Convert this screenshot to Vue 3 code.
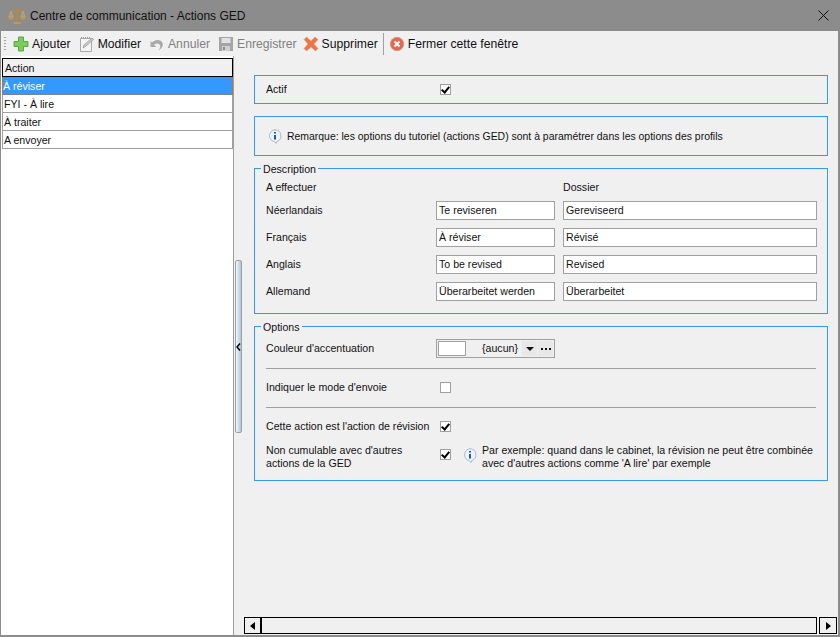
<script setup>
const actions = ['À réviser', 'FYI - À lire', 'À traiter', 'A envoyer']
const langs = [
  { label: 'Néerlandais', a: 'Te reviseren', b: 'Gereviseerd' },
  { label: 'Français', a: 'À réviser', b: 'Révisé' },
  { label: 'Anglais', a: 'To be revised', b: 'Revised' },
  { label: 'Allemand', a: 'Überarbeitet werden', b: 'Überarbeitet' },
]
</script>

<template>
  <div class="window">
    <header class="titlebar">
      <svg class="logo" width="18" height="18" viewBox="0 0 18 18" fill="none">
        <path d="M9 1v14M3 4h12" stroke="#b98a3e" stroke-width="1.600"/>
        <path d="M5.500 16h7" stroke="#c9974a" stroke-width="2"/>
        <path d="M3 4L.8 10h4.400zM15 4l-2.200 6h4.400z" fill="#a89a80" stroke="#c9a66a" stroke-width=".8"/>
        <path d="M.5 10a2.500 2.500 0 0 0 5 0zM12.500 10a2.500 2.500 0 0 0 5 0z" fill="#c9974a"/>
      </svg>
      <span class="title">Centre de communication - Actions GED</span>
      <svg class="close" width="11" height="11" viewBox="0 0 11 11"><path d="M.5.5l10 10M10.500.5l-10 10" stroke="#111" stroke-width="1"/></svg>
    </header>

    <nav class="toolbar">
      <span class="grip"></span>
      <span class="tool">
        <svg width="16" height="16" viewBox="0 0 16 16"><path d="M5.500 1h5v4.500H15v5h-4.500V15h-5v-4.500H1v-5h4.500z" fill="#7ccb5e" stroke="#5aa845"/></svg>
        Ajouter
      </span>
      <span class="tool">
        <svg width="16" height="16" viewBox="0 0 16 16"><path d="M1.500 2.500h11v13h-11z" fill="#f4f4f4" stroke="#aaa"/><path d="M2 1.500h10" stroke="#999" stroke-dasharray="1 1"/><path d="M4 12l1-3 8-7 1.500 1.500-8 7z" fill="#c9c9c9" stroke="#888" stroke-width=".6"/></svg>
        Modifier
      </span>
      <span class="tool off">
        <svg width="16" height="16" viewBox="0 0 16 16"><path d="M3 6.500C6 3 12 3 13.500 7c1 3-1 6-4 7.500 1.500-2 2.500-4.500 1-6-1.500-1.500-4-1-5.500.5L7.500 11H1.500V5z" fill="#a8a8a8"/></svg>
        Annuler
      </span>
      <span class="tool off save">
        <svg width="16" height="16" viewBox="0 0 16 16"><path d="M1 1h14v14H1z" fill="#a5a5a5"/><path d="M3.500 2h9v5h-9z" fill="#e2e2e2"/><path d="M4 10h8v5H4z" fill="#d0d0d0"/><path d="M5 11h2v3H5z" fill="#8e8e8e"/></svg>
        Enregistrer
      </span>
      <span class="tool">
        <svg width="16" height="16" viewBox="0 0 16 16"><path d="M1 3.500L3.500 1 8 5l4-4 3 2.500L11 8l4 4.500L12.500 15 8 11l-4.500 4L1 12.500 5 8z" fill="#ee7448" stroke="#e6a080" stroke-width=".6"/></svg>
        Supprimer
      </span>
      <span class="sep"></span>
      <span class="tool">
        <svg width="16" height="16" viewBox="0 0 16 16"><circle cx="8" cy="8" r="6.700" fill="#e8664d" stroke="#c9a090"/><path d="M5.500 5.500l5 5M10.500 5.500l-5 5" stroke="#fff" stroke-width="2"/></svg>
        Fermer cette fenêtre
      </span>
    </nav>

    <div class="body">
      <aside class="list">
        <div class="list-head">Action</div>
        <div v-for="(a, i) in actions" :key="a" class="list-row" :class="{ selected: i === 0 }">{{ a }}</div>
      </aside>

      <div class="splitter">
        <div class="handle">
          <svg width="5" height="8" viewBox="0 0 5 8"><path d="M4 .5L1 4l3 3.500" fill="none" stroke="#000" stroke-width="1.500"/></svg>
        </div>
      </div>

      <main class="content">
        <div class="scroll-area">
          <section class="panel actif">
            <span class="lbl">Actif</span>
            <span class="check on"></span>
          </section>

          <section class="panel note">
            <svg class="info" width="14" height="15" viewBox="0 0 14 15"><path d="M7 .8a6 6 0 0 1 1.800 11.700L8 14.500 6.500 12.700A6 6 0 0 1 7 .8z" fill="#eef3fb" stroke="#a9b8d2"/><path d="M7 3v1.500M7 6v4.500" stroke="#1f55b5" stroke-width="2"/></svg>
            <span>Remarque: les options du tutoriel (actions GED) sont à paramétrer dans les options des profils</span>
          </section>

          <fieldset class="group desc">
            <legend>Description</legend>
            <div class="desc-head">
              <span>A effectuer</span>
              <span>Dossier</span>
            </div>
            <div v-for="l in langs" :key="l.label" class="desc-row">
              <span class="lbl">{{ l.label }}</span>
              <input class="field" type="text" :value="l.a" />
              <input class="field" type="text" :value="l.b" />
            </div>
          </fieldset>

          <fieldset class="group opts">
            <legend>Options</legend>
            <div class="opt-row first">
              <span class="lbl">Couleur d'accentuation</span>
              <div class="color">
                <span class="swatch"></span>
                <span class="none">{aucun}</span>
                <span class="cbtn"><i class="tri"></i></span>
                <span class="cbtn dots">
                  <svg width="10" height="2" viewBox="0 0 10 2"><path d="M0 0h2v2H0zM4 0h2v2H4zM8 0h2v2H8z" fill="#111"/></svg>
                </span>
              </div>
            </div>
            <hr />
            <div class="opt-row">
              <span class="lbl">Indiquer le mode d'envoie</span>
              <span class="check"></span>
            </div>
            <hr />
            <div class="opt-row">
              <span class="lbl">Cette action est l'action de révision</span>
              <span class="check on"></span>
            </div>
            <div class="opt-row last">
              <span class="lbl two">Non cumulable avec d'autres<br />actions de la GED</span>
              <span class="check on"></span>
              <svg class="info small" width="14" height="15" viewBox="0 0 14 15"><path d="M7 .8a6 6 0 0 1 1.800 11.700L8 14.500 6.500 12.700A6 6 0 0 1 7 .8z" fill="#eef3fb" stroke="#a9b8d2"/><path d="M7 3v1.500M7 6v4.500" stroke="#1f55b5" stroke-width="2"/></svg>
              <span class="hint">Par exemple: quand dans le cabinet, la révision ne peut être combinée<br />avec d'autres actions comme 'A lire' par exemple</span>
            </div>
          </fieldset>
        </div>

        <div class="hscroll">
          <span class="sbtn"><i class="arrow left"></i></span>
          <span class="track"></span>
          <span class="sbtn"><i class="arrow right"></i></span>
        </div>
      </main>
    </div>
  </div>
</template>

<style>
html, body { margin: 0; padding: 0; }
</style>

<style scoped>
.window {
  width: 840px;
  height: 637px;
  box-sizing: border-box;
  display: flex;
  flex-direction: column;
  background: #f0f0f0;
  border: solid #8c8c8c;
  border-width: 0 2px 2px 1px;
  font-family: "Liberation Sans", Arial, sans-serif;
  font-size: 10.6px;
  color: #111;
  overflow: hidden;
}
.titlebar {
  height: 31px;
  margin: 0 -2px 0 -1px;
  flex: none;
  background: #8c8c8c;
  display: flex;
  align-items: center;
  padding: 0 11px 0 8px;
}
.title { margin-left: 4px; font-size: 12px; color: #111; }
.logo { flex: none; }
.close { margin-left: auto; }
.toolbar {
  height: 25px;
  flex: none;
  display: flex;
  align-items: center;
  padding-left: 3px;
  font-size: 12.2px;
}
.grip {
  width: 2px;
  height: 14px;
  margin-right: 7px;
  background: repeating-linear-gradient(#a0a0a0 0 1px, transparent 1px 3px);
}
.tool { display: flex; align-items: center; gap: 3px; margin-right: 8px; white-space: nowrap; }
.tool.off { color: #808080; }
.tool.save { margin-right: 6px; }
.sep { width: 1px; height: 22px; background: #a0a0a0; margin: 0 5px 0 -3px; }
.body { flex: 1; min-height: 0; display: flex; }
.list {
  width: 233px;
  flex: none;
  box-sizing: border-box;
  background: #fff;
  border-right: 1px solid #a0a0a0;
  padding: 2px 0 0 1px;
}
.list-head {
  height: 19px;
  box-sizing: border-box;
  border: 1px solid #000;
  background: #f0f0f0;
  padding-left: 2px;
  line-height: 18px;
}
.list-row {
  height: 18px;
  box-sizing: border-box;
  border: solid #a0a0a0;
  border-width: 0 1px 1px 1px;
  padding-left: 1px;
  line-height: 18px;
  background: #fff;
}
.list-row.selected { background: #3399ff; color: #fff; border: 1px dotted #b8702a; line-height: 16px; padding-left: 0; }
.splitter {
  width: 8px;
  flex: none;
  padding: 204px 0 0 1px;
  box-sizing: border-box;
}
.handle {
  width: 7px;
  height: 173px;
  box-sizing: border-box;
  border: 1px solid #a0a0a0;
  border-radius: 2px;
  background: linear-gradient(90deg, #f4f8fb, #a9c6dc);
  display: flex;
  align-items: center;
}
.content { flex: 1; min-width: 0; display: flex; flex-direction: column; }
.scroll-area { flex: 1; padding: 19px 10px 0 12px; box-sizing: border-box; }
.panel {
  box-sizing: border-box;
  border: 1px solid #3399ff;
  display: flex;
  align-items: center;
}
.actif { height: 29px; padding-left: 11px; margin-bottom: 12px; }
.actif .lbl { width: 174px; padding-bottom: 2px; }
.note { height: 40px; padding-left: 13px; gap: 5px; margin-bottom: 5px; font-size: 10.45px; }
.group {
  margin: 0;
  padding: 0 11px;
  min-width: 0;
  border: 1px solid #3399ff;
}
.group legend { padding: 2px 2px 0; margin-left: -5px; line-height: 12px; }
.desc { height: 153px; box-sizing: border-box; margin-bottom: 5px; }
.desc-head {
  display: grid;
  grid-template-columns: 297px 1fr;
  height: 15px;
  margin: 5px 0 6px;
  align-items: center;
}
.desc-head span { padding-bottom: 2px; }
.desc-row {
  display: grid;
  grid-template-columns: 162px 119px 254px;
  column-gap: 8px;
  align-items: center;
  height: 19px;
  margin-bottom: 8px;
}
.desc-row .lbl { padding-bottom: 2px; }
.field {
  width: 100%;
  height: 19px;
  box-sizing: border-box;
  margin: 0;
  border: 1px solid #a0a0a0;
  background: #fff;
  font: inherit;
  color: inherit;
  padding: 0 2px 2px;
  outline: none;
}
.opts { height: 162px; box-sizing: border-box; }
.opt-row { display: flex; align-items: center; height: 13px; }
.opt-row .lbl { width: 174px; flex: none; white-space: nowrap; padding-bottom: 2px; }
.opt-row.first { height: 19px; margin-top: 6px; }
.group hr { margin: 0; border: 0; border-top: 1px solid #a0a0a0; }
.first + hr { margin: 10px 0 12px; }
.first + hr + .opt-row + hr { margin: 13px 0 12px; }
.first + hr + .opt-row + hr + .opt-row { margin-bottom: 11px; }
.last { height: 26px; align-items: flex-start; }
.opt-row .two { line-height: 13px; padding-bottom: 0; }
.last .check { margin-top: 5px; }
.info.small { margin: 4px 0 0 12px; flex: none; }
.hint { margin-left: 5px; line-height: 13px; white-space: nowrap; }
.check {
  width: 11px;
  height: 11px;
  box-sizing: border-box;
  border: 1px solid #a0a0a0;
  background: #fff;
  position: relative;
  flex: none;
}
.check.on::after {
  content: "";
  position: absolute;
  left: 2px;
  top: 0;
  width: 3px;
  height: 6px;
  border: solid #000;
  border-width: 0 2px 2px 0;
  transform: rotate(40deg);
}
.color {
  margin-left: -4px;
  width: 119px;
  height: 19px;
  box-sizing: border-box;
  border: 1px solid #a0a0a0;
  background: #f0f0f0;
  display: flex;
  align-items: center;
  padding-left: 1px;
}
.swatch { width: 28px; height: 15px; box-sizing: border-box; border: 1px solid #a0a0a0; background: #fff; flex: none; }
.none { flex: 1; text-align: right; padding: 0 4px 2px 0; }
.cbtn { width: 15px; height: 15px; background: #e8e8e8; display: flex; align-items: center; justify-content: center; flex: none; margin-right: 1px; }
.tri { width: 0; height: 0; border: solid transparent; border-width: 4px 4px 0; border-top-color: #111; }
.hscroll {
  height: 17px;
  margin: 0 1px 1px 2px;
  display: flex;
  flex: none;
  gap: 2px;
  box-sizing: border-box;
}
.sbtn {
  width: 18px;
  height: 17px;
  box-sizing: border-box;
  border: 1px solid #000;
  display: flex;
  align-items: center;
  justify-content: center;
  flex: none;
}
.sbtn:first-child { border-right-width: 2px; }
.hscroll .track { flex: 1; margin-left: -2px; border: solid #000; border-width: 1px 1px 1px 0; box-sizing: border-box; }
.arrow { width: 0; height: 0; border: solid transparent; }
.arrow.left { border-width: 4px 5px 4px 0; border-right-color: #000; }
.arrow.right { border-width: 4px 0 4px 5px; border-left-color: #000; }
</style>
